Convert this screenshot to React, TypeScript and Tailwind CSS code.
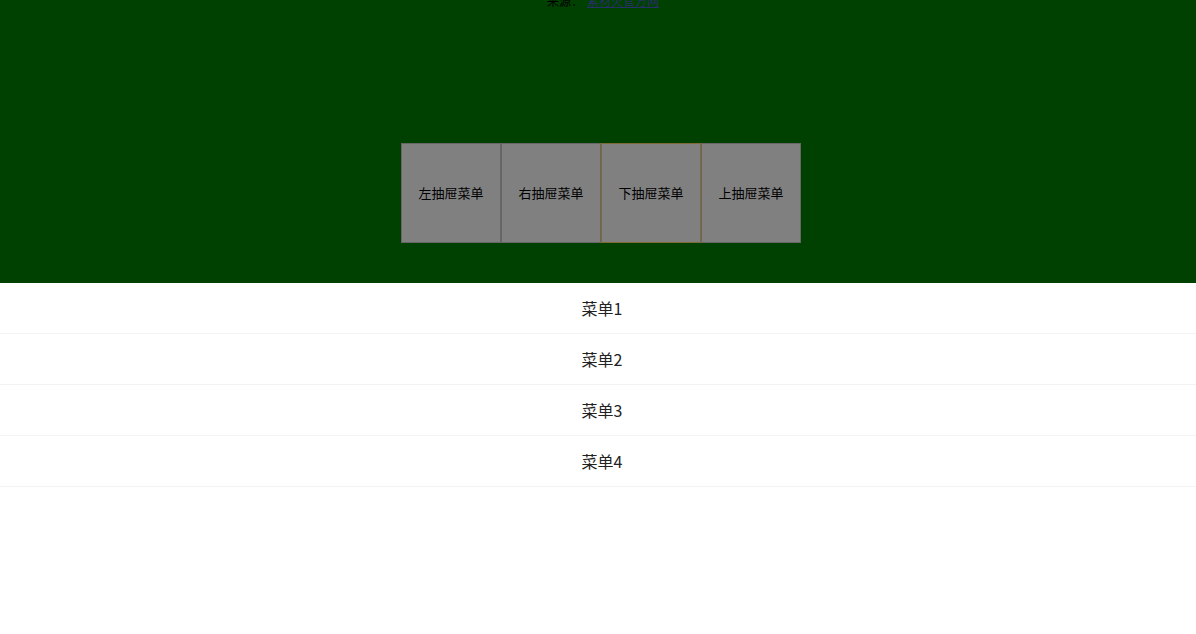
const tabs = ['左抽屉菜单', '右抽屉菜单', '下抽屉菜单', '上抽屉菜单']
const menus = ['菜单1', '菜单2', '菜单3', '菜单4']

export default function App() {
  return (
    <div
      className="min-h-[634px] bg-white"
      style={{ fontFamily: '"Microsoft YaHei", "Noto Sans CJK SC", sans-serif' }}
    >
      <div className="h-[283px] overflow-hidden bg-[#004000]">
        <div className="-mt-[9px] pl-[10px] text-center text-[12px] leading-[20px] text-black">
          来源：
          <a href="#" className="ml-[4px] text-[#28306a] underline">
            素材火官方网
          </a>
        </div>
        <div className="mt-[132px] flex justify-center pl-[6px]">
          {tabs.map((t, i) => (
            <div
              key={t}
              className={
                i === 2
                  ? 'flex h-[100px] w-[100px] items-center justify-center border border-[#7f6a35] bg-[#808080] text-[13px] text-black'
                  : 'flex h-[100px] w-[100px] items-center justify-center border border-[#666666] bg-[#808080] text-[13px] text-black'
              }
            >
              {t}
            </div>
          ))}
        </div>
      </div>
      <ul>
        {menus.map(m => (
          <li
            key={m}
            className="flex h-[51px] items-center justify-center border-b border-[#f3f3f3] pl-[8px] text-[16px] text-[#222]"
          >
            {m}
          </li>
        ))}
      </ul>
    </div>
  )
}
